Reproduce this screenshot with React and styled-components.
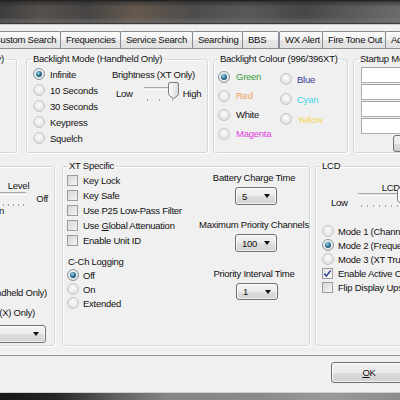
import React from 'react';
import styled, { createGlobalStyle } from 'styled-components';

const GlobalStyle = createGlobalStyle`
  html, body { margin: 0; padding: 0; }
  body {
    font-family: "Liberation Sans", Arial, sans-serif;
    font-size: 9.5px;
    letter-spacing: -0.25px;
    color: #111;
  }
`;

const Window = styled.div`
  width: 400px;
  height: 400px;
  overflow: hidden;
  background: #f0f0f0;
  display: flex;
  flex-direction: column;
`;

const TitleBar = styled.div`
  flex: none;
  height: 24px;
  border-bottom: 1px solid #c9c9c9;
  background:
    linear-gradient(180deg, #1c1c1c 0, rgba(40,40,40,0.6) 8%, rgba(0,0,0,0) 30%, rgba(0,0,0,0) 70%, rgba(120,120,120,0.5) 92%, #2e2e2e 100%),
    linear-gradient(90deg, #3d3d3d 0, #56504c 10%, #474544 22%, #65594f 34%, #4e4c4a 48%, #5b5957 62%, #474747 76%, #5e5e5e 90%, #6c6c6c 100%);
`;

const Body = styled.div`
  flex: 1;
  display: flex;
  flex-direction: column;
  padding-top: 6px;
`;

const TabStrip = styled.div`
  flex: none;
  display: flex;
  height: 17px;
  margin-left: -12px;
`;

const Tab = styled.div`
  flex: none;
  box-sizing: border-box;
  width: ${p => p.$w}px;
  height: 17px;
  margin-right: ${p => (p.$gap ? 0 : -1)}px;
  padding-left: 5px;
  border: 1px solid #898c95;
  border-bottom: none;
  border-radius: 2px 2px 0 0;
  background: linear-gradient(#fbfbfb 0, #f1f1f1 50%, #e6e6e6 51%, #e1e1e1 100%);
  line-height: 16px;
  white-space: nowrap;
  overflow: hidden;
`;

const TabPanel = styled.div`
  flex: none;
  margin: 0 -2px;
  border: 1px solid #8e8f8f;
  box-shadow: inset 0 -1px 0 #fafafa;
  padding: 4px 0 9px;
  overflow: hidden;
  display: flex;
  flex-direction: column;
  gap: 7px;
`;

const Row = styled.div`
  display: flex;
  height: ${p => p.$h}px;
`;

const Group = styled.fieldset`
  flex: none;
  box-sizing: border-box;
  width: ${p => p.$w}px;
  min-width: 0;
  margin: 0 0 0 ${p => p.$ml}px;
  padding: 0 4px 0 4px;
  border: 1px solid #d5d8da;
  border-radius: 3px;
  box-shadow: inset 1px 1px 0 #fff, 1px 1px 0 #fff;
  display: flex;
  flex-direction: ${p => (p.$row ? 'row' : 'column')};
  align-items: ${p => p.$align || 'stretch'};
  white-space: nowrap;
`;

const Legend = styled.legend`
  padding: 0 2px;
  line-height: 12px;
`;

const Column = styled.div`
  flex: none;
  display: flex;
  flex-direction: column;
  width: ${p => (p.$w ? `${p.$w}px` : 'auto')};
  padding-top: ${p => p.$pt || 0}px;
  margin-left: ${p => (p.$push ? 'auto' : '0')};
  margin-right: ${p => p.$mr || 0}px;
  align-items: ${p => p.$align || 'stretch'};
`;

const Option = styled.label`
  display: flex;
  align-items: center;
  gap: ${p => p.$gap ?? 5}px;
  height: ${p => p.$h}px;
  padding-left: ${p => p.$pl || 0}px;
  color: ${p => p.$color || '#111'};
  white-space: nowrap;
`;

const RadioDot = styled.span`
  flex: none;
  position: relative;
  box-sizing: border-box;
  width: 12px;
  height: 12px;
  border-radius: 50%;
  border: 1px solid ${p => (p.$on ? '#8a99a6' : '#c6c6c6')};
  background: radial-gradient(circle at 50% 40%, #fdfdfd 0, #e8e8e8 55%, #d7d7d7 100%);
  &::after {
    content: '';
    display: ${p => (p.$on ? 'block' : 'none')};
    position: absolute;
    left: 2px;
    top: 2px;
    width: 6px;
    height: 6px;
    border-radius: 50%;
    background: radial-gradient(circle at 40% 35%, #a9dcec 0, #2d7595 45%, #0e3b57 100%);
  }
`;

const Box = styled.span`
  flex: none;
  box-sizing: border-box;
  width: 11px;
  height: 11px;
  border: 1px solid #9c9c9c;
  background: ${p => (p.$on ? 'linear-gradient(135deg, #e6e6e6, #fbfbfb)' : 'linear-gradient(135deg, #d6d6d6, #f5f5f5)')};
  display: flex;
  align-items: center;
  justify-content: center;
`;

const Caption = styled.div`
  line-height: 12px;
  white-space: nowrap;
  margin-top: ${p => p.$mt || 0}px;
  margin-right: ${p => p.$mr || 0}px;
  margin-left: ${p => p.$ml || 0}px;
  padding-left: ${p => p.$pl || 0}px;
  text-align: ${p => p.$ta || 'left'};
  word-spacing: ${p => p.$ws || 0}px;
`;

const SliderRow = styled.div`
  display: flex;
  align-items: flex-start;
  margin-top: ${p => p.$mt || 0}px;
`;

const SliderBox = styled.div`
  flex: none;
  position: relative;
  width: ${p => p.$w}px;
  height: 20px;
  margin-top: ${p => p.$mt || 0}px;
  &::before {
    content: '';
    position: absolute;
    left: 2px;
    right: 2px;
    top: 5px;
    height: 1px;
    border-top: 1px solid #a9a9a9;
    border-bottom: 1px solid #fff;
    background: #e4e4e4;
  }
  &::after {
    content: '';
    position: absolute;
    left: 5px;
    right: 4px;
    top: 17px;
    height: 2px;
    background: repeating-linear-gradient(90deg, #a4a4a4 0 1px, transparent 1px ${p => p.$tick}px);
  }
`;

const ThumbSvg = styled.svg`
  position: absolute;
  top: 0;
  left: ${p => p.$x}px;
  z-index: 1;
`;

const TextInput = styled.div`
  box-sizing: border-box;
  width: 110px;
  height: 16px;
  margin: 0 0 1px 3px;
  border: 1px solid #abadb3;
  border-top-color: #a0a3aa;
  background: #fff;
`;

const SmallButton = styled.div`
  box-sizing: border-box;
  width: 60px;
  height: 17px;
  margin-left: 35px;
  border: 1px solid #707070;
  border-radius: 3px;
  background: linear-gradient(#f2f2f2 0, #ebebeb 50%, #dddddd 51%, #cfcfcf 100%);
`;

const ComboBox = styled.div`
  flex: none;
  box-sizing: border-box;
  width: ${p => p.$w}px;
  height: ${p => p.$h || 18}px;
  margin-top: ${p => p.$mt || 0}px;
  margin-left: ${p => p.$ml || 0}px;
  margin-right: ${p => p.$mr || 0}px;
  padding: 0 6px 0 6px;
  border: 1px solid #707070;
  border-radius: 3px;
  background: linear-gradient(#f3f3f3 0, #ececec 50%, #dedede 51%, #d3d3d3 100%);
  box-shadow: inset 0 0 0 1px rgba(255, 255, 255, 0.7);
  display: flex;
  align-items: center;
  justify-content: space-between;
`;

const Arrow = styled.span`
  width: 0;
  height: 0;
  border-left: 3.5px solid transparent;
  border-right: 3.5px solid transparent;
  border-top: 4px solid #111;
`;

const ButtonRow = styled.div`
  flex: none;
  display: flex;
  padding: 6px 0 0 331px;
`;

const PushButton = styled.div`
  flex: none;
  box-sizing: border-box;
  width: 78px;
  height: 21px;
  border: 1px solid #707070;
  border-radius: 3px;
  background: linear-gradient(#f2f2f2 0, #ebebeb 50%, #dddddd 51%, #cfcfcf 100%);
  box-shadow: inset 0 0 0 1px rgba(255, 255, 255, 0.75);
  display: flex;
  align-items: center;
  justify-content: center;
  padding-right: 2px;
`;

const BottomBand = styled.div`
  flex: none;
  margin-top: auto;
  height: 7px;
  border-top: 1px solid #cfcfcf;
  background: linear-gradient(90deg, #161616 0, #262626 14%, #5c5c5c 28%, #868686 42%, #8a8a8a 65%, #9a9a9a 82%, #8c8c8c 100%);
`;

function Radio({ on, children, h = 16, color, pl, gap }) {
  return (
    <Option $h={h} $color={color} $pl={pl} $gap={gap}>
      <RadioDot $on={on} />
      <span>{children}</span>
    </Option>
  );
}

function Check({ on, children, h = 15, pl }) {
  return (
    <Option $h={h} $pl={pl}>
      <Box $on={on}>
        {on && (
          <svg width="9" height="9" viewBox="0 0 9 9">
            <path d="M1.3 4.6 L3.4 7 L7.7 1.4" fill="none" stroke="#3a4d99" strokeWidth="1.6" />
          </svg>
        )}
      </Box>
      <span>{children}</span>
    </Option>
  );
}

function Slider({ w, tick, x, mt }) {
  return (
    <SliderBox $w={w} $tick={tick} $mt={mt}>
      {x !== undefined && (
        <ThumbSvg $x={x} width="11" height="17" viewBox="0 0 11 17">
          <defs>
            <linearGradient id="thumbFill" x1="0" x2="1" y1="0" y2="0">
              <stop offset="0" stopColor="#fdfdfd" />
              <stop offset="1" stopColor="#d9d9d9" />
            </linearGradient>
          </defs>
          <path d="M2 0.5 H9 Q10.5 0.5 10.5 2 V11.5 Q10.5 13 9 14.2 L5.5 16.5 L2 14.2 Q0.5 13 0.5 11.5 V2 Q0.5 0.5 2 0.5 Z" fill="url(#thumbFill)" stroke="#7b7b7b" />
        </ThumbSvg>
      )}
    </SliderBox>
  );
}

function Combo({ value, w, h, mt, ml, mr }) {
  return (
    <ComboBox $w={w} $h={h} $mt={mt} $ml={ml} $mr={mr}>
      <span>{value}</span>
      <Arrow />
    </ComboBox>
  );
}

const tabs = [
  { label: 'Custom Search', w: 73 },
  { label: 'Frequencies', w: 61 },
  { label: 'Service Search', w: 73 },
  { label: 'Searching', w: 51 },
  { label: 'BBS', w: 37, gap: true },
  { label: 'WX Alert', w: 44 },
  { label: 'Fire Tone Out', w: 64 },
  { label: 'Advanced', w: 60 },
];

const colours = [
  [
    { name: 'Green', color: '#3b9a3e', on: true },
    { name: 'Red', color: '#eea05c' },
    { name: 'White', color: '#111' },
    { name: 'Magenta', color: '#de3fdc' },
  ],
  [
    { name: 'Blue', color: '#3b3597' },
    { name: 'Cyan', color: '#3fd7ef' },
    { name: 'Yellow', color: '#f0d75a' },
  ],
];

export default function App() {
  return (
    <Window>
      <GlobalStyle />
      <TitleBar />
      <Body>
        <TabStrip>
          {tabs.map(t => (
            <Tab key={t.label} $w={t.w} $gap={t.gap}>{t.label}</Tab>
          ))}
        </TabStrip>

        <TabPanel>
          <Row $h={100}>
            <Group $w={127} $ml={-109}>
              <Legend>Key Beep (Handheld Only)</Legend>
            </Group>

            <Group $w={182} $ml={9} $row>
              <Legend>Backlight Mode (Handheld Only)</Legend>
              <Column $w={81} $pt={1}>
                <Radio on pl={2}>Infinite</Radio>
                <Radio pl={2}>10 Seconds</Radio>
                <Radio pl={2}>30 Seconds</Radio>
                <Radio pl={2}>Keypress</Radio>
                <Radio pl={2}>Squelch</Radio>
              </Column>
              <Column>
                <Caption $mt={4}>Brightness (XT Only)</Caption>
                <SliderRow $mt={1}>
                  <Caption $mt={6} $ml={4} $mr={9}>Low</Caption>
                  <Slider w={37} tick={12.5} x={26} />
                  <Caption $mt={6} $ml={4}>High</Caption>
                </SliderRow>
              </Column>
            </Group>

            <Group $w={135} $ml={5} $row>
              <Legend>Backlight Colour (996/396XT)</Legend>
              <Column $w={62} $pt={2}>
                {colours[0].map(c => (
                  <Radio key={c.name} on={c.on} h={19} color={c.color} gap={6}>{c.name}</Radio>
                ))}
              </Column>
              <Column $pt={4}>
                {colours[1].map(c => (
                  <Radio key={c.name} h={20} color={c.color} gap={5}>{c.name}</Radio>
                ))}
              </Column>
            </Group>

            <Group $w={140} $ml={5}>
              <Legend>Startup Message</Legend>
              <Column $pt={2}>
                <TextInput />
                <TextInput />
                <TextInput />
                <TextInput />
                <SmallButton />
              </Column>
            </Group>
          </Row>

          <Row $h={186}>
            <Group $w={150} $ml={-94} $align="flex-end">
              <Legend>Audio</Legend>
              <SliderRow $mt={8}>
                <Column>
                  <Caption $ta="right" $mr={3} $ws={14}>Key Beep Level</Caption>
                  <Slider w={90} tick={5} mt={-5} />
                </Column>
                <Caption $mt={13} $ml={4} $mr={2}>Off</Caption>
              </SliderRow>
              <Caption $mt={-2} $mr={46}>Vibration</Caption>
              <Caption $mt={70} $mr={3}>Keypad Lock (Handheld Only)</Caption>
              <Caption $mt={8} $mr={15}>Scan Speed (XT(X) Only)</Caption>
              <Combo value="Normal" w={120} mt={6} mr={4} />
            </Group>

            <Group $w={248} $ml={7} $row>
              <Legend>XT Specific</Legend>
              <Column $pt={1}>
                <Check>Key Lock</Check>
                <Check>Key Safe</Check>
                <Check>Use P25 Low-Pass Filter</Check>
                <Check>Use <u>G</u>lobal Attenuation</Check>
                <Check>Enable Unit ID</Check>
                <Caption $mt={8} $pl={1}>C-Ch Logging</Caption>
                <Radio on h={14} gap={4}>Off</Radio>
                <Radio h={14} gap={4}>On</Radio>
                <Radio h={14} gap={4}>Extended</Radio>
              </Column>
              <Column $w={110} $mr={-4} $align="center" $push>
                <Caption>Battery Charge Time</Caption>
                <Combo value="5" w={42} mt={3} ml={4} />
                <Caption $mt={14}>Maximum Priority Channels</Caption>
                <Combo value="100" w={42} mt={3} ml={4} />
                <Caption $mt={16}>Priority Interval Time</Caption>
                <Combo value="1" w={42} h={17} mt={3} ml={6} />
              </Column>
            </Group>

            <Group $w={130} $ml={5}>
              <Legend>LCD</Legend>
              <SliderRow $mt={10}>
                <Caption $mt={15} $ml={11} $mr={8}>Low</Caption>
                <Column>
                  <Caption $pl={26}>LCD Contrast</Caption>
                  <Slider w={100} tick={6} x={41} mt={-6} />
                </Column>
              </SliderRow>
              <Column $pt={15}>
                <Radio h={14} pl={2} gap={4}>Mode 1 (Channel Name)</Radio>
                <Radio on h={14} pl={2} gap={4}>Mode 2 (Frequency)</Radio>
                <Radio h={14} pl={2} gap={4}>Mode 3 (XT Trunking)</Radio>
                <Check on h={14} pl={2}>Enable Active Channel Display</Check>
                <Check h={14} pl={2}>Flip Display Upside Down</Check>
              </Column>
            </Group>
          </Row>
        </TabPanel>

        <ButtonRow>
          <PushButton><u>O</u>K</PushButton>
        </ButtonRow>

        <BottomBand />
      </Body>
    </Window>
  );
}
